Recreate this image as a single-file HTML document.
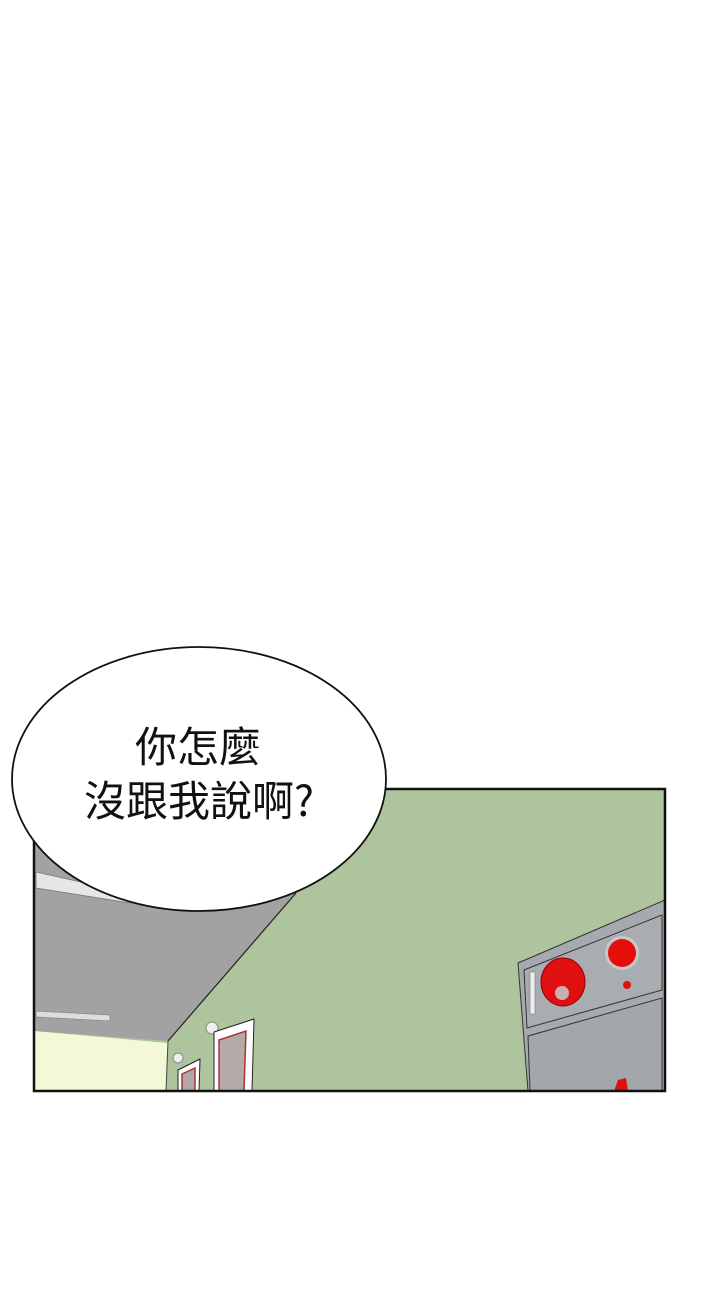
<!DOCTYPE html>
<html><head><meta charset="utf-8"><style>
html,body{margin:0;padding:0;background:#fff;width:720px;height:1312px;overflow:hidden}
svg{position:absolute;left:0;top:0}
</style></head><body>
<svg width="720" height="1312" viewBox="0 0 720 1312" xmlns="http://www.w3.org/2000/svg">
<rect x="34" y="789" width="631" height="302" fill="#adc49c"/>
<polygon points="34,789 300,789 296,893 168,1041 34,1031" fill="#a2a2a2"/>
<line x1="296" y1="893" x2="168" y2="1041" stroke="#222" stroke-width="1.2"/>
<polygon points="34,1031 168,1043 166,1091 34,1091" fill="#f3f8d6"/>
<line x1="168" y1="1041" x2="166" y2="1091" stroke="#444"/>
<polygon points="36,872 130,893 130,903 36,888" fill="#e6e6e6" stroke="#777" stroke-width="0.8"/>
<polygon points="36,1011 110,1015 110,1021 36,1017" fill="#ddd" stroke="#888" stroke-width="0.8"/>
<circle cx="212" cy="1028" r="6" fill="#eee" stroke="#888"/>
<circle cx="178" cy="1058" r="5" fill="#eee" stroke="#888"/>
<polygon points="214,1032 254,1019 252,1091 214,1091" fill="#fff" stroke="#222"/>
<polygon points="219,1040 246,1031 244,1091 219,1091" fill="#b5aaaa" stroke="#a33" stroke-width="1.5"/>
<polygon points="178,1070 200,1059 199,1091 178,1091" fill="#fff" stroke="#222"/>
<polygon points="182,1074 195,1068 195,1091 182,1091" fill="#b0a8a8" stroke="#a33" stroke-width="1.5"/>
<polygon points="518,963 665,900 665,1091 528,1091" fill="#a6a9ad" stroke="#333"/>
<polygon points="524,970 662,915 662,990 527,1028" fill="#a9acb0" stroke="#333"/>
<polygon points="528,1036 662,998 662,1091 530,1091" fill="#a3a6aa" stroke="#333"/>
<rect x="530" y="972" width="5" height="42" fill="#eee" stroke="#777" stroke-width="0.6"/>
<ellipse cx="563" cy="982" rx="22" ry="24" fill="#e01010" stroke="#900"/>
<circle cx="562" cy="993" r="7" fill="#c8b0b0"/>
<circle cx="622" cy="953" r="17" fill="#c8c8c8"/>
<circle cx="622" cy="953" r="14" fill="#e60d0d"/>
<circle cx="627" cy="985" r="4" fill="#e01010"/>
<polygon points="618,1080 626,1078 628,1091 614,1091" fill="#e01010"/>
<rect x="34" y="789" width="631" height="302" fill="none" stroke="#111" stroke-width="2.5"/>
<ellipse cx="199" cy="779" rx="187" ry="132" fill="#fff" stroke="#111" stroke-width="1.8"/>
<text x="198" y="762" text-anchor="middle" font-family="Noto Sans CJK TC, sans-serif" font-size="42" fill="#111">你怎麼</text>
<text x="199" y="816" text-anchor="middle" font-family="Noto Sans CJK TC, sans-serif" font-size="42" fill="#111">沒跟我說啊?</text>
</svg>
</body></html>
